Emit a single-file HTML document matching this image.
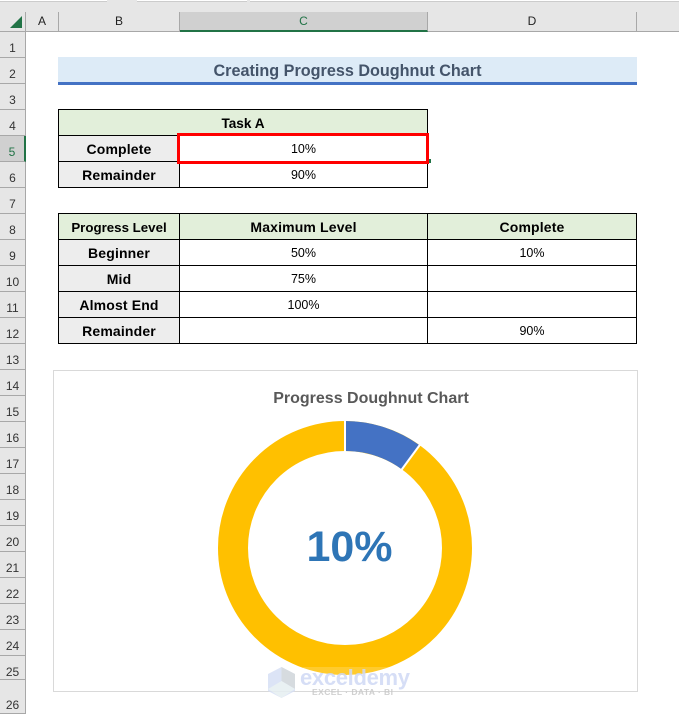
<!DOCTYPE html>
<html><head><meta charset="utf-8">
<style>
html,body{margin:0;padding:0;background:#fff}
#p{position:relative;width:679px;height:714px;overflow:hidden;background:#fff;font-family:"Liberation Sans",sans-serif}
#p div{position:absolute;box-sizing:border-box}
.rh{left:0;width:26px;background:#e6e6e6;border-bottom:1px solid #a8a8a8;border-right:1px solid #a8a8a8;color:#333;font-size:12px;text-align:center;height:26px;line-height:33px}
.ch{top:12px;height:20px;background:#e6e6e6;border-bottom:1px solid #a8a8a8;border-right:1px solid #a8a8a8;color:#222;font-size:12px;text-align:center;line-height:19px}
.c{border:1px solid #000;height:27px;text-align:center;font-size:12.5px;line-height:27px;color:#000}
.b{font-weight:bold;font-size:14px;letter-spacing:.15px;background:#ededed}
.g{background:#e2efda}
.w{background:#fff}
</style></head><body><div id="p">
<div style="left:0;top:0;width:679px;height:12px;background:#e6e6e6"></div>
<div style="left:0;top:0;width:107px;height:2px;background:#fff;border-bottom:1px solid #ccc"></div>
<div style="left:137px;top:0;width:110px;height:2px;background:#fff;border-bottom:1px solid #ccc"></div>
<div style="left:250px;top:0;width:429px;height:2px;background:#fff;border-bottom:1px solid #ccc"></div>

<div style="left:0;top:12px;width:26px;height:20px;background:#e6e6e6;border-right:1px solid #a8a8a8;border-bottom:1px solid #a8a8a8"></div>
<svg style="position:absolute;left:9px;top:15px" width="14" height="14"><path d="M13 1V13H1Z" fill="#217346"/></svg>
<div class="ch" style="left:26px;width:33px">A</div>
<div class="ch" style="left:59px;width:121px">B</div>
<div class="ch" style="left:180px;width:248px;background:#d0d0d0;border-bottom:2px solid #217346;color:#217346">C</div>
<div class="ch" style="left:428px;width:209px">D</div>
<div class="ch" style="left:637px;width:42px;border-right:0"></div>

<div class="rh" style="top:32px">1</div>
<div class="rh" style="top:58px">2</div>
<div class="rh" style="top:84px">3</div>
<div class="rh" style="top:110px">4</div>
<div class="rh" style="top:136px;background:#d0d0d0;border-right:2px solid #217346;color:#217346">5</div>
<div class="rh" style="top:162px">6</div>
<div class="rh" style="top:188px">7</div>
<div class="rh" style="top:214px">8</div>
<div class="rh" style="top:240px">9</div>
<div class="rh" style="top:266px">10</div>
<div class="rh" style="top:292px">11</div>
<div class="rh" style="top:318px">12</div>
<div class="rh" style="top:344px">13</div>
<div class="rh" style="top:370px">14</div>
<div class="rh" style="top:396px">15</div>
<div class="rh" style="top:422px">16</div>
<div class="rh" style="top:448px">17</div>
<div class="rh" style="top:474px">18</div>
<div class="rh" style="top:500px">19</div>
<div class="rh" style="top:526px">20</div>
<div class="rh" style="top:552px">21</div>
<div class="rh" style="top:578px">22</div>
<div class="rh" style="top:604px">23</div>
<div class="rh" style="top:630px">24</div>
<div class="rh" style="top:656px;height:24px">25</div>
<div class="rh" style="top:680px;height:34px;line-height:50px">26</div>

<div style="left:58px;top:57px;width:579px;height:28px;background:#ddebf7;border-bottom:3px solid #4472c4;text-align:center;color:#44546a;font-weight:bold;font-size:16.2px;line-height:29px">Creating Progress Doughnut Chart</div>

<div class="c b g" style="left:58px;top:109px;width:370px;font-size:13.6px;letter-spacing:0">Task A</div>
<div class="c b" style="left:58px;top:135px;width:122px">Complete</div>
<div class="c w" style="left:179px;top:135px;width:249px">10%</div>
<div class="c b" style="left:58px;top:161px;width:122px">Remainder</div>
<div class="c w" style="left:179px;top:161px;width:249px">90%</div>
<div style="left:177px;top:133px;width:252px;height:31px;border:3px solid #f00"></div>
<div style="left:429px;top:159px;width:2px;height:4px;background:#217346"></div>

<div class="c b g" style="left:58px;top:213px;width:122px;font-size:13.3px;letter-spacing:0">Progress Level</div>
<div class="c b g" style="left:179px;top:213px;width:249px">Maximum Level</div>
<div class="c b g" style="left:427px;top:213px;width:210px">Complete</div>
<div class="c b" style="left:58px;top:239px;width:122px">Beginner</div>
<div class="c w" style="left:179px;top:239px;width:249px">50%</div>
<div class="c w" style="left:427px;top:239px;width:210px">10%</div>
<div class="c b" style="left:58px;top:265px;width:122px">Mid</div>
<div class="c w" style="left:179px;top:265px;width:249px">75%</div>
<div class="c w" style="left:427px;top:265px;width:210px"></div>
<div class="c b" style="left:58px;top:291px;width:122px">Almost End</div>
<div class="c w" style="left:179px;top:291px;width:249px">100%</div>
<div class="c w" style="left:427px;top:291px;width:210px"></div>
<div class="c b" style="left:58px;top:317px;width:122px">Remainder</div>
<div class="c w" style="left:179px;top:317px;width:249px"></div>
<div class="c w" style="left:427px;top:317px;width:210px">90%</div>

<div style="left:53px;top:370px;width:585px;height:322px;background:#fff;border:1px solid #d9d9d9"></div>
<div style="left:53px;top:389px;width:636px;text-align:center;color:#595959;font-weight:bold;font-size:16px;line-height:20px">Progress Doughnut Chart</div>
<svg style="position:absolute;left:0;top:0" width="679" height="714">
<circle cx="345" cy="548" r="112" fill="none" stroke="#ffc000" stroke-width="30"/>
<path d="M345 421A127 127 0 0 1 419.6 445.3L402 469.5A97 97 0 0 0 345 451Z" fill="#4472c4"/>
<path d="M345 420V452M420.5 444L401 470.5" stroke="#fff" stroke-width="2" fill="none"/>
<text x="349.500" y="561" text-anchor="middle" font-family="Liberation Sans, sans-serif" font-weight="bold" font-size="43" fill="#2e75b6">10%</text>
<rect x="303" y="667" width="92" height="8" fill="#fff" opacity="0.18"/>
<g opacity="0.85">
<path d="M281.500 667L295 674V691L281.500 698L268 691V674Z" fill="#d7e0f5"/>
<path d="M281.500 667L295 674V689L281.500 681Z" fill="#d0d5da"/>
<path d="M268 689L281.500 681L295 689L281.500 698Z" fill="#e6eff2"/>
<text x="300" y="685" font-family="Liberation Sans, sans-serif" font-weight="bold" font-size="22" fill="#cfd9f5" textLength="110">exceldemy</text>
<text x="312" y="695" font-family="Liberation Sans, sans-serif" font-weight="bold" font-size="8.500" fill="#c8c8c8" textLength="81">EXCEL · DATA · BI</text>
</g>
</svg>
</div></body></html>
